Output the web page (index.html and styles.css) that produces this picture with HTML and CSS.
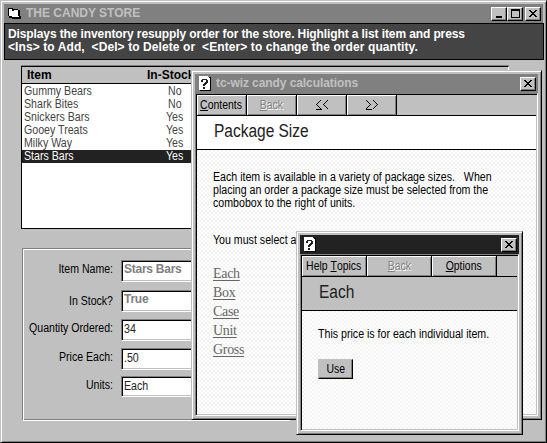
FILE: index.html
```html
<!DOCTYPE html>
<html lang="en">
<head>
<meta charset="utf-8">
<title>The Candy Store</title>
<link rel="stylesheet" href="styles.css">
</head>
<body>
<svg class="defs" width="0" height="0">
  <symbol id="x" viewBox="0 0 8 7"><path d="M0 0h2v1h1v1h2v-1h1v-1h2v1h-1v1h-1v1h-1v1h1v1h1v1h1v1h-2v-1h-1v-1h-2v1h-1v1h-2v-1h1v-1h1v-1h1v-1h-1v-1h-1v-1h-1z"/></symbol>
  <symbol id="help" viewBox="0 0 12 15">
    <path d="M1 1h11v14h-11z" fill="#000"/><path d="M0 0h9v1h1v1h1v12h-11z" fill="#fff"/>
    <path d="M3 3h5v1h1v3h-1v1h-1v1h-1v1h-2v-2h1v-1h1v-1h1v-2h-3v2h-2v-2h1zM4 11h2v2h-2z" fill="#222"/>
  </symbol>
</svg>

<main class="window store">
  <header class="titlebar">
    <svg class="app-icon" width="13" height="11" viewBox="0 0 13 11"><path d="M0 0h5v1h5v1h2v6h1v3h-9v-1h-3v-2h-1z" fill="#000"/><path d="M1 1h3v2h2v-1h4v6h1v1h-7v-1h-3z" fill="#fff"/></svg>
    <h1 class="t-store">THE CANDY STORE</h1>
    <div class="controls">
      <button class="ctl"><svg width="7" height="8"><path d="M0 6h6v2h-6z"/></svg></button>
      <button class="ctl"><svg width="9" height="9"><path fill-rule="evenodd" d="M0 0h9v9h-9zM1 2v6h7v-6z"/></svg></button>
      <button class="ctl close"><svg width="8" height="7"><use href="#x"/></svg></button>
    </div>
  </header>
  <p class="message"><span class="m1">Displays the inventory resupply order for the store. Highlight a list item and press</span><br><span class="m2">&lt;Ins&gt; to Add,&nbsp; &lt;Del&gt; to Delete or&nbsp; &lt;Enter&gt; to change the order quantity.</span></p>
  <section class="list">
    <div class="list-head"><span>Item</span><span>In-Stock</span></div>
    <ul class="items">
      <li><span>Gummy Bears</span><span>No</span></li>
      <li><span>Shark Bites</span><span>No</span></li>
      <li><span>Snickers Bars</span><span>Yes</span></li>
      <li><span>Gooey Treats</span><span>Yes</span></li>
      <li><span>Milky Way</span><span>Yes</span></li>
      <li class="selected"><span>Stars Bars</span><span>Yes</span></li>
    </ul>
  </section>
  <section class="form">
    <div class="row"><label>Item Name:</label><div class="field off">Stars Bars</div></div>
    <div class="row in-stock"><label>In Stock?</label><div class="field off">True</div></div>
    <div class="row"><label>Quantity Ordered:</label><div class="field"><span class="narrow">34</span></div></div>
    <div class="row"><label>Price Each:</label><div class="field"><span class="narrow">.50</span></div></div>
    <div class="row units"><label>Units:</label><div class="field"><span class="narrow">Each</span></div></div>
  </section>
</main>

<section class="window help">
  <header class="titlebar">
    <svg class="help-icon" width="12" height="15"><use href="#help"/></svg>
    <h2 class="t-help">tc-wiz candy calculations</h2>
    <button class="ctl"><svg width="8" height="7"><use href="#x"/></svg></button>
  </header>
  <div class="client">
    <nav class="toolbar">
      <button class="tool"><span><u>C</u>ontents</span></button>
      <button class="tool disabled"><span><u>B</u>ack</span></button>
      <button class="tool"><svg width="12" height="10"><path d="M4 0h1v1h-1v1h-1v1h-1v1h-1v1h1v1h1v1h1v1h1v1h-1v-1h-1v-1h-1v-1h-1v-1h-1v-1h1v-1h1v-1h1v-1h1zM11 0h1v1h-1v1h-1v1h-1v1h-1v1h1v1h1v1h1v1h1v1h-1v-1h-1v-1h-1v-1h-1v-1h-1v-1h1v-1h1v-1h1v-1h1zM0 9h6v1h-6z"/></svg></button>
      <button class="tool"><svg width="12" height="10"><path d="M1 0h-1v1h1v1h1v1h1v1h1v1h-1v1h-1v1h-1v1h-1v1h1v-1h1v-1h1v-1h1v-1h1v-1h-1v-1h-1v-1h-1v-1h-1zM8 0h-1v1h1v1h1v1h1v1h1v1h-1v1h-1v1h-1v1h-1v1h1v-1h1v-1h1v-1h1v-1h1v-1h-1v-1h-1v-1h-1v-1h-1zM0 9h6v1h-6z"/></svg></button>
    </nav>
    <h3 class="heading"><span>Package Size</span></h3>
    <div class="page">
      <p class="intro">Each item is available in a variety of package sizes.&nbsp;&nbsp; When<br>placing an order a package size must be selected from the<br>combobox to the right of units.</p>
      <p class="must">You must select a package size.</p>
      <ul class="links"><li><a>Each</a></li><li><a>Box</a></li><li><a>Case</a></li><li><a>Unit</a></li><li><a>Gross</a></li></ul>
    </div>
  </div>
</section>

<section class="window popup">
  <header class="titlebar active">
    <svg class="help-icon" width="12" height="15"><use href="#help"/></svg>
    <button class="ctl"><svg width="8" height="7"><use href="#x"/></svg></button>
  </header>
  <div class="client">
    <nav class="toolbar">
      <button class="tool"><span>Help <u>T</u>opics</span></button>
      <button class="tool disabled"><span><u>B</u>ack</span></button>
      <button class="tool"><span><u>O</u>ptions</span></button>
    </nav>
    <h3 class="heading"><span>Each</span></h3>
    <div class="page">
      <p class="price">This price is for each individual item.</p>
      <button class="use"><span>Use</span></button>
    </div>
  </div>
</section>
</body>
</html>
```
FILE: styles.css
```css
* { box-sizing: border-box; margin: 0; padding: 0; }
body { position: relative; width: 547px; height: 443px; overflow: hidden; background: #c0c0c0; color: #000; font: 12px/13px "Liberation Sans", Arial, sans-serif; white-space: nowrap; }
ul { list-style: none; }
button { font: inherit; color: inherit; }
svg { display: block; shape-rendering: crispEdges; }
.defs { position: absolute; }
u { text-decoration: none; border-bottom: 1px solid currentColor; display: inline-block; height: 12px; line-height: 13px; }

/* Condensed interface lettering */
.narrow, .intro, .must, .price, .heading span, .items span { display: inline-block; transform: scaleX(.885); transform-origin: 0 50%; }
.tool span, .use span { display: inline-block; transform: scaleX(.87); }
.row label { transform: scaleX(.88); transform-origin: 100% 50%; }

/* Windows */
.window { position: absolute; display: flex; flex-direction: column; background: #c0c0c0; border: 1px solid; border-color: #c0c0c0 #000 #000 #c0c0c0; box-shadow: inset 1px 1px #fff, inset -1px -1px #808080; padding: 3px; }
.store { left: 0; top: 0; width: 547px; height: 443px; }
.help { left: 191px; top: 70px; width: 351px; height: 350px; }
.popup { left: 296px; top: 231px; width: 227px; height: 204px; }
.titlebar { display: flex; align-items: center; flex: none; height: 19px; background: #808080; color: #c0c0c0; padding: 0 2px 0 4px; }
.titlebar.active { background: #222; }
.window h1, .window h2 { font-size: 12px; line-height: 15px; font-weight: bold; flex: 1; }
.t-help { letter-spacing: -0.08px; }
.help-icon { margin-right: 5px; }
.active .help-icon { margin-right: auto; }
.app-icon { margin-right: 5px; }
.controls { display: flex; }
.ctl { display: flex; align-items: center; justify-content: center; width: 16px; height: 14px; background: #c0c0c0; border: 1px solid; border-color: #fff #000 #000 #fff; box-shadow: inset -1px -1px #808080; }
.ctl.close { margin-left: 2px; }

/* Candy store form */
.message { flex: none; height: 37px; background: #444; border: 1px solid #000; margin: 0 -1px 0 0; padding: 4px 0 0 3px; color: #fff; font-weight: bold; }
.m1 { letter-spacing: -0.11px; }
.m2 { letter-spacing: 0.09px; }
.list { flex: none; width: 488px; height: 163px; margin: 6px 0 0 17px; background: #fff; border: 1px solid #000; border-right-color: #fff; box-shadow: 0 -1px #808080; }
.list-head { display: flex; height: 17px; background: #c0c0c0; border-bottom: 1px solid #000; font-weight: bold; padding: 2px 0 0 5px; }
.list-head span:first-child { width: 120px; }
.items { color: #444; padding-top: 1px; }
.items li { display: grid; grid-template-columns: 127px 50px; justify-items: center; padding-left: 2px; height: 13px; }
.items li span:first-child { justify-self: start; }
.items .selected { background: #222; color: #fff; }
.form { flex: none; width: 268px; height: 173px; margin: 19px 0 0 18px; border: 1px solid #808080; border-right-color: #fff; border-bottom-color: #fff; box-shadow: inset 1px 1px #fff, inset -1px -1px #808080; padding: 11px 0 0 0; display: grid; grid-template-rows: 30px 29px 29px 28px 21px; }
.row { display: grid; grid-template-columns: 90px 140px; column-gap: 8px; align-items: start; }
.row label { display: flex; justify-content: flex-end; padding-top: 3px; }
.row.in-stock label { padding-top: 5px; }
.field { height: 22px; background: #fff; border: 1px solid; border-color: #808080 #fff #fff #808080; box-shadow: inset 1px 1px #000, inset -1px -1px #c0c0c0; padding: 3px 0 0 2px; color: #222; }
.units .field { height: 21px; }
.field.off { color: #808080; font-weight: bold; padding-top: 2px; letter-spacing: -.25px; }

/* Help windows */
.client { flex: 1; display: flex; flex-direction: column; border: 1px solid; border-color: #808080 #fff #fff #808080; padding: 1px; box-shadow: inset 1px 1px #000, inset -1px -1px #c0c0c0; }
.toolbar { flex: none; display: flex; height: 21px; border-bottom: 1px solid #000; }
.tool { width: 50px; height: 20px; display: flex; align-items: center; justify-content: center; background: #c0c0c0; border: 0; border-right: 1px solid #000; box-shadow: inset 1px 1px #fff, inset -1px -1px #808080; }
.popup .tool { width: 65px; }
.disabled { color: #808080; text-shadow: 1px 1px #fff; }
.heading { flex: none; height: 34px; display: flex; align-items: center; border-bottom: 1px solid #000; background: #fff; padding: 0 0 3px 17px; font-size: 18px; font-weight: normal; color: #222; }
.heading span { transform: scaleX(.86); }
.popup .heading { background: #c0c0c0; }
.page { flex: 1; padding-left: 16px; background-color: #fff; background-image: radial-gradient(circle at 1px 1px, #f4f4f4 0.7px, transparent 0.8px), radial-gradient(circle at 3px 3px, #f4f4f4 0.7px, transparent 0.8px); background-size: 4px 4px; }
.intro, .must, .price { display: block; }
.intro { padding-top: 21px; }
.must { padding-top: 24px; }
.links { padding-top: 17px; font: 14px/19px "Liberation Serif", "Times New Roman", serif; letter-spacing: -.3px; color: #666; }
.links a { text-decoration: underline; text-underline-offset: 2px; }
.price { padding-top: 17px; }
.use { display: block; width: 35px; height: 20px; margin-top: 18px; background: #c0c0c0; border: 1px solid; border-color: #c0c0c0 #000 #000 #c0c0c0; box-shadow: inset -1px -1px #808080; }
```
